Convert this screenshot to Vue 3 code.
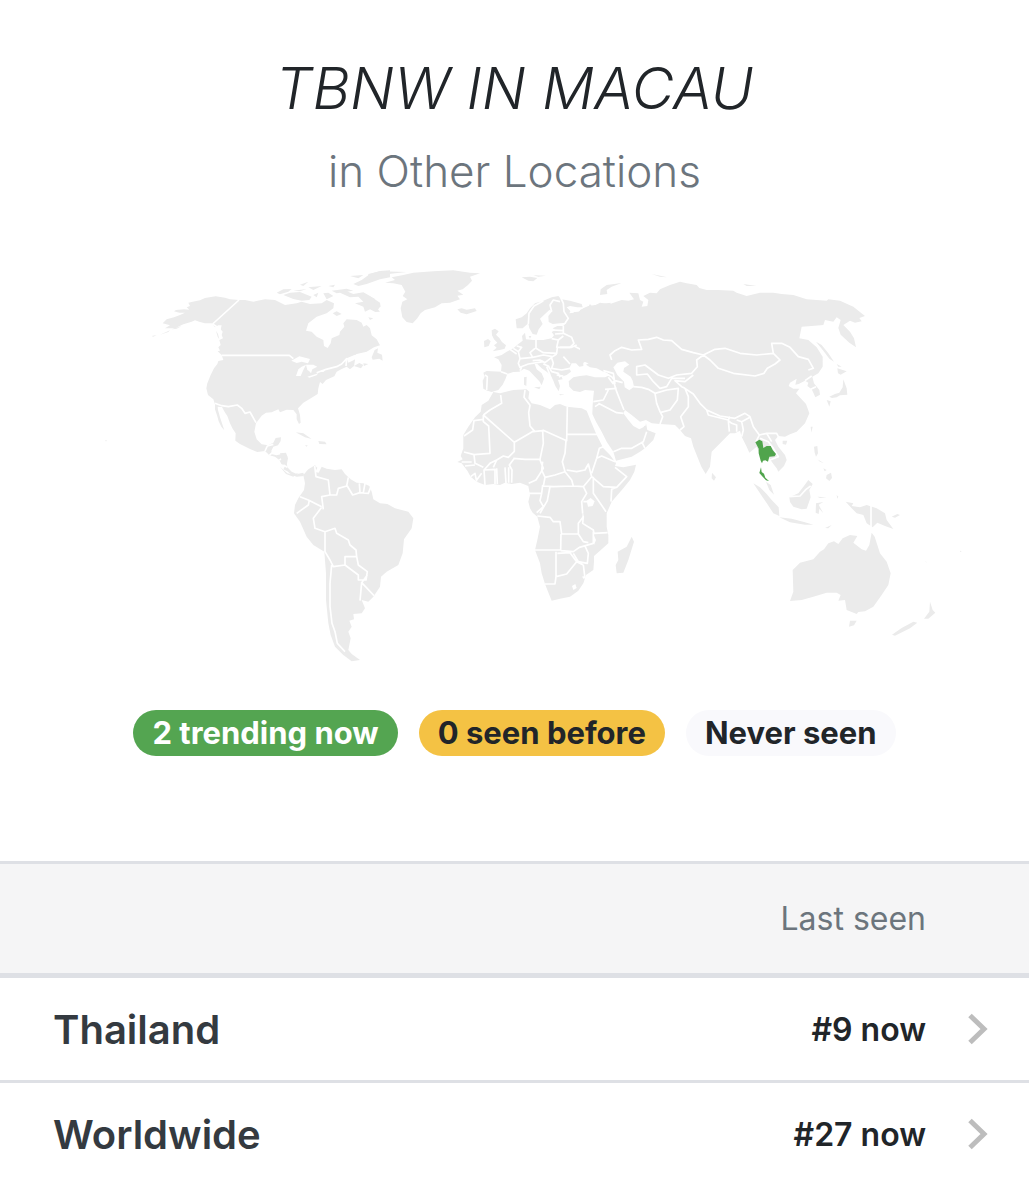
<script setup>
import { ref } from 'vue'

const badges = [
  { kind: 'now', text: '2 trending now' },
  { kind: 'before', text: '0 seen before' },
  { kind: 'never', text: 'Never seen' },
]

const locations = ref([
  { name: 'Thailand', rank: '#9 now' },
  { name: 'Worldwide', rank: '#27 now' },
])

// land = filled shapes, water = lakes cut out of them, borders = country lines
const regions = [
  {
    id: 'north-america',
    at: 'translate(270 -6)',
    land: `M267 120L240 118 225 113 197 109 165 114 150 121 135 124 115 128 120 138 110 142 118 149 102 148 78 150 72 154 88 158 105 158 90 165 72 172 50 178 38 190 60 196 45 205 75 205 100 193 125 185 135 181 150 186 165 190 185 190 195 202 205 196 215 196 212 208 218 215 215 225 219 235 208 240 212 255 205 262 210 272 203 274 215 285 220 300 205 303 202 312 192 325 182 345 172 370 169 385 174 405 190 418 195 433 195 448 201 466 206 484 214 500 223 511 214 484 210 472 204 450 203 440 216 441 224 456 232 468 240 490 248 506 257 520 256 542 270 552 300 567 322 576 345 573 358 586 375 590 388 600 394 612 406 617 400 628 412 634 425 645 440 650 462 648 458 640 442 643 425 635 412 622 410 602 412 588 395 582 380 586 366 583 364 572 370 560 384 556 392 543 393 532 377 534 370 548 355 556 335 553 320 538 313 515 318 490 335 467 348 458 365 457 385 448 390 457 410 449 430 450 440 463 440 478 447 492 452 488 450 465 444 445 460 428 485 413 503 402 505 385 510 366 518 372 528 360 553 349 560 335 575 327 590 320 600 328 612 318 633 325 640 315 628 309 612 318 615 300 605 292 620 282 650 275 672 262 690 256 680 238 665 226 660 205 650 195 640 200 635 188 620 180 590 178 580 190 583 200 570 215 568 225 545 235 542 250 533 264 522 258 520 240 500 230 485 215 468 212 475 190 500 170 530 160 550 145 552 130 530 120 515 130 480 132 455 125 440 130 405 135 375 120 345 118 310 125 285 120Z
M665 292L674 270 684 265 682 278 696 284 698 302 688 296 668 299Z M640 310L655 312 642 318Z
M570 98L590 94 610 102 640 97 660 108 690 128 692 140 680 144 690 155 676 156 660 148 645 155 640 140 615 130 640 125 625 110 600 112Z
M400 105L420 98 450 96 485 110 478 120 455 122 430 117Z M380 98L400 88 425 87 415 95 390 103Z M490 105L505 98 500 112Z M520 100L535 98 550 108 530 118Z M545 92L590 86 610 92 560 100Z
M450 74L475 65 460 78Z M475 82L515 78 490 90Z M535 78L555 74 550 82Z M600 48L640 45 625 55Z M610 72L635 60 660 42 690 33 720 31 720 52 690 58 650 72 625 78Z
M430 92L470 87 450 94Z M548 160L560 154 575 162 560 168Z M655 172L670 175 660 180Z
M30 224L60 211 55 216Z M65 208L95 198 80 206Z M5 228L20 225 10 230Z
M437 517L460 520 485 537 465 532Z M505 543L525 545 530 553 508 552Z M465 556L473 556 470 560Z
M198 212L204 222 208 238 203 230Z`,
    water: `M424 302L448 289 480 297 474 310 455 305 440 309Z M455 320L468 314 460 330 452 348 438 348 445 328Z M468 314L490 314 502 320 487 328 483 340 478 334 472 330Z M472 350L505 340 500 346 478 353Z M505 335L528 329 520 336Z M590 295L615 284 612 300 595 308Z`,
    borders: `M267 120L188 192 212 208 M215 286H418L430 296 M500 338L528 328 560 320 575 312 590 296 588 318 M195 430L215 437 235 440 262 435 275 445 285 460 300 456 318 488 M345 573L352 558 370 553 M358 586L370 575 M388 600L410 588 M400 615L412 622`,
  },
  {
    id: 'north-atlantic',
    at: 'translate(930 -6)',
    land: `M45 68L75 60 65 52 100 45 130 38 190 34 250 31 300 38 330 40 300 50 306 62 294 75 278 88 262 92 280 104 262 107 270 118 240 128 215 130 195 142 165 150 152 160 142 175 128 190 110 186 97 172 92 145 97 125 112 118 98 108 106 95 95 75 70 70Z
M-5 42L30 34 110 36 55 42 30 55 -5 60Z M-3 108L14 116 14 126 30 140 22 152 8 142 -3 148Z
M262 148L275 145 290 149 315 145 320 153 290 163 272 158Z M455 52L480 50 502 54 490 64 475 62Z M490 46L528 47 505 50Z
M365 211L375 206 386 214 378 224 388 234 396 246 408 256 404 266 392 269 368 274 380 263 372 256 382 248 372 238 366 226Z M342 243L354 237 362 244 356 258 343 262Z`,
    water: '',
    borders: '',
  },
  {
    id: 'europe',
    at: 'translate(930 -6)',
    land: `M437 178L455 172 470 160 480 145 495 130 520 122 545 112 565 108 575 118 600 122 635 132 638 142 622 142 600 138 590 142 605 157 625 155 640 145 655 138 722 128 722 340 700 335 680 325 660 322 648 314 662 306 655 300 640 308 640 318 628 320 618 310 605 310 598 325 603 335 590 345 575 350 578 358 564 360 570 378 566 394 556 378 550 362 542 345 530 335 515 325 502 312 494 312 500 328 515 340 522 356 515 376 508 364 490 345 478 332 462 326 448 335 430 336 412 342 406 358 398 374 385 390 365 396 352 392 340 386 338 362 344 350 340 338 350 333 393 335 395 315 385 298 372 292 395 285 410 275 430 265 445 252 458 242 456 228 465 218 468 238 490 240 520 240 545 235 552 226 545 216 556 210 548 205 562 198 580 198 590 188 570 190 548 192 536 186 535 168 548 152 538 150 525 162 510 176 518 192 506 208 500 224 488 222 478 205 475 190 458 205 440 205Z
M462 352L470 350 469 378 462 374Z M492 382L512 380 508 388Z M568 402L584 404 570 406Z M476 228L484 228 480 236Z`,
    water: 'M590 140L602 152 598 160 612 158 604 148Z',
    borders: `M475 192L477 160 492 138 510 128 520 122 M545 155L540 135 550 120 570 125 M570 108L580 130 582 155 595 175 585 190 M580 198L580 220 555 222 M550 210L580 212 M580 220L605 232 612 250 600 262 560 262 565 240 580 228 M545 236L565 240 M498 240L498 265 520 278 560 280 562 262 M612 258L640 272 672 285 675 302 660 306 M495 265L480 278 488 292 450 296 445 275 455 262 440 258 M430 265L445 275 M450 296L445 310 450 322 475 312 520 305 M488 292L520 285 548 290 525 308 510 300 488 302 M548 290L560 282 M545 295L550 310 545 325 575 330 600 325 M580 290L600 312 M520 312L535 318 545 335 565 340 570 352 M393 335L412 342 M345 345L352 350 350 390 M455 322L450 332 M560 345L580 348 M530 320L540 345 M420 268L440 282`,
  },
  {
    id: 'asia',
    at: 'translate(1500 -6)',
    land: `M60 150L85 140 90 132 97 140 120 128 150 132 185 120 205 122 222 118 208 98 235 100 240 120 250 125 245 140 262 138 265 120 250 108 270 98 290 100 300 88 330 75 360 65 380 70 410 75 418 84 440 90 475 90 520 92 530 98 560 108 600 98 640 98 665 102 700 105 740 118 800 122 805 118 840 122 880 140 915 168 898 174 905 184 885 188 870 182 850 195 870 215 882 235 888 262 868 248 842 224 835 204 842 180 830 172 820 185 795 180 790 195 755 198 725 200 718 235 745 240 770 262 788 290 788 320 775 340 757 350 762 370 778 390 780 404 766 412 760 398 755 388 742 378 745 368 735 362 716 372 706 374 710 356 690 368 686 378 700 386 718 386 708 400 722 415 738 432 748 460 735 490 710 515 690 523 675 530 655 528 645 540 655 560 675 585 680 600 672 618 655 635 650 625 640 612 628 595 615 575 600 585 590 560 568 578 560 560 545 530 540 512 525 520 510 520 490 540 470 560 455 575 450 620 437 642 424 620 412 590 400 560 393 535 375 528 360 510 345 495 300 492 275 490 258 480 240 485 215 465 195 450 190 460 205 480 220 498 238 508 250 502 258 490 262 510 287 520 280 540 255 565 240 575 215 590 168 602 160 575 140 545 125 515 108 485 97 462 98 435 100 410 102 392 75 390 60 396 40 392 28 380 26 364 40 352 60 348 80 346 105 352 135 352 150 345 130 332 112 320 60 300Z
M850 358L860 385 862 404 840 406 830 412 816 414 808 410 825 402 838 398 848 382Z M832 325L860 334 842 344 834 340Z M800 420L812 424 808 440Z M768 245L785 255 805 280 822 305 808 296 790 272Z M752 500L758 500 754 518Z M668 542L682 542 678 554 668 552Z M456 638L468 652 462 662 455 655Z
M120 105L122 88 140 75 185 69 155 80 140 90 142 102Z M275 42L322 52 300 50Z M550 72L590 78 560 78Z M830 312L845 320 835 320Z`,
    water: `M160 322L172 308 195 304 208 314 192 324 190 335 212 350 218 362 222 380 208 391 194 382 192 365 172 345Z M247 500L255 486 258 496Z`,
    borders: `M155 300L150 285 165 272 185 262 215 270 245 268 235 240 265 238 290 232 310 240 335 242 365 268 400 278 430 285 465 268 495 265 540 280 590 285 640 280 635 250 665 250 690 262 715 290 745 298 760 325 745 330
M430 285L450 300 475 325 520 340 585 348 612 340 622 325 645 312 660 300 640 280
M430 285L410 300 412 320 395 340 350 345 325 355 295 345 255 315 230 320 230 345 262 342 280 365 300 385 320 380 335 355 375 355 M400 345L375 365 345 362 365 380 375 385
M220 380L245 382 265 388 285 400 290 430 300 455 308 470 300 492 M285 400L320 390 355 385 352 420 330 450 300 458 M375 385L385 410 385 440 362 470 372 500 360 510
M370 382L400 402 420 430 440 450 480 468 525 475 555 460 570 470 580 500 598 525 620 520 650 520 655 530 M440 450L445 465 505 480 510 470 M505 482L515 490 530 495 530 515 M505 482L508 515 M530 480L545 485 570 472 M545 485L550 510 545 530 M598 525L588 545 M600 535L625 545 640 565 655 590 630 600 M620 520L635 545
M160 362L170 395 180 420 192 450 M135 388L170 385 M100 425L130 420 145 390 M115 430L170 458 190 460 M105 440L120 430 M160 575L185 565 215 565 250 545 260 515 M245 545L255 565 M135 340L155 350 165 362 188 368 M145 352L160 372 M165 372L160 340 130 332
M735 362L755 348 M752 388L768 380 M0 262L35 262 50 255`,
  },
  {
    id: 'africa',
    at: 'translate(1170 354)',
    land: `M115 62L130 36 150 40 190 30 230 28 238 35 235 55 245 70 270 75 300 88 315 75 330 72 350 80 395 85 410 92 425 130 440 165 460 205 480 225 498 250 495 258 520 262 558 254 553 275 540 300 520 325 485 365 470 400 470 440 475 465 475 490 450 512 432 528 432 545 430 570 408 585 400 610 385 632 360 650 330 656 305 662 298 645 285 612 275 580 270 550 255 510 262 480 270 440 262 410 248 398 240 385 235 365 240 345 235 318 210 308 185 312 165 308 150 315 130 312 105 315 80 305 62 290 52 272 35 250 22 246 38 238 32 228 40 205 40 165 55 140 75 112 92 95 95 75Z
M545 470L552 485 535 540 520 578 500 580 497 555 505 540 503 515 530 500Z`,
    water: `M410 362L422 354 434 364 428 378 414 380Z M398 392L402 412 397 410Z M430 462L438 480 432 495Z M366 618L376 612 380 624 370 630Z M396 590L403 588 402 598Z`,
    borders: `M152 45L155 70 120 90 100 105 M100 118L72 122 68 150 42 168 M100 105L193 187 252 152 240 138 236 98 240 76 222 52 225 30
M100 105V125L116 138 120 220 72 224 42 216 M193 187V214L175 232 160 228 140 240 130 262 M190 235L225 238 270 238 280 190 278 152 250 155 M278 150L350 182 352 80 M352 163H442
M348 182L345 220 337 245 345 275 315 285 285 292 275 270 278 245 M193 235L178 255 186 270 185 308 M270 240L280 265 258 300 236 310 M285 292L280 318 310 320 370 318 365 300 345 275
M350 270L380 275 405 270 415 252 425 290 400 320 370 318 M425 290L460 320 500 322 530 290 495 262 M425 280L440 235 455 228 495 245 M440 235L448 205 460 200 M500 322L485 328 483 365 M430 290V340L468 395
M300 320L292 362 270 400 M262 408L300 412 310 425 330 425 335 462 385 462 385 430 M236 340H275L278 315 M275 340L270 362 280 380 260 398 M400 320L410 340 395 365 398 400 M400 365H430
M385 462L385 430 400 410 398 430 430 450 432 460 473 458 M333 462L332 510 255 510 M332 512L370 515 388 502 430 490 430 455 M385 462L400 485 415 488 M318 515L318 590 315 612 285 612 M322 520L360 518 380 545 350 582 318 590 M370 520L385 545 412 550 415 520 405 498 M400 555L405 595 M380 545L400 555
M105 315L102 270 135 268V312 M140 265L142 312 M165 262L168 310 M176 262V308 M102 270L120 250 140 240 M72 224L75 250 100 262 M35 246H65 M62 290L75 280 80 305 M95 280L80 300 M45 258L75 255`,
  },
  {
    id: 'south-america',
    at: 'translate(660 564)',
    land: `M70 75L85 58 105 46 112 54 105 66 116 68 125 50 140 56 165 60 185 58 195 72 212 88 230 98 250 100 268 108 275 125 280 148 300 160 322 162 345 175 385 185 400 205 395 235 372 268 368 310 355 345 320 365 303 380 300 410 280 440 265 455 245 450 255 475 245 490 220 492 222 508 208 512 215 530 205 545 212 565 205 600 215 612 240 630 215 634 190 615 165 590 152 555 145 520 138 450 138 370 133 305 100 285 80 260 60 215 42 190 45 165 55 145 72 120 75 100Z M0 10L18 8 24 25 20 45 5 35Z M0 50L22 70 45 74 70 68 72 76 50 70 40 80 18 72Z`,
    water: '',
    borders: `M104 48L108 80 145 90 150 135 125 140 130 178 M150 135L170 135 175 115 200 108 205 82 M200 105L218 135 240 128 238 100 M240 128L265 130 272 112 M255 100L250 128 M60 140L85 150 125 170 M88 150L85 165 50 190 M125 172L100 205 105 235 135 245 165 235 170 250 205 270 210 285 228 300 230 320 195 320 195 345 160 350 150 330 135 305 135 245 M230 320L235 345 262 365 258 390 235 390 235 375 195 345 M262 375L245 398 282 437 M245 398L240 452 M155 345L150 400 150 470 156 520 165 545 172 580 195 605`,
  },
  {
    id: 'oceania',
    at: 'translate(1860 414)',
    land: `M348 500L360 488 400 478 420 455 432 448 445 430 462 424 475 432 488 415 510 405 532 408 520 428 545 448 558 452 568 435 575 398 584 410 592 435 600 460 620 485 632 520 625 555 605 585 580 620 555 634 535 636 530 642 500 630 495 600 475 602 482 585 470 578 440 578 400 590 365 600 330 603 340 575 338 510Z
M510 662L530 662 522 676 507 680Z M750 605L758 630 766 638 745 656 732 656 748 635Z M636 704L665 684 700 665 712 668 690 685 645 707Z M735 482L742 488 738 486Z
M497 305L520 310 515 318 540 322 560 315 590 325 615 340 620 360 640 387 615 378 592 368 578 382 560 370 550 345 530 340 515 325Z M635 350L652 342 660 345 645 353Z M470 285L475 290 472 296Z
M220 250L240 262 260 282 275 300 296 322 298 348 280 340 262 312 240 280Z M298 352L335 356 372 366 400 374 375 374 330 367Z M435 384L455 375 445 385Z M328 292L355 280 372 258 385 240 398 252 388 270 392 292 380 326 365 328 340 320 330 306Z
M408 310L430 306 416 314 430 340 418 326 416 342 407 338Z M412 290L440 292 420 294Z M402 140L412 138 414 160 408 170 404 158Z M412 178L432 190 420 185Z M440 225L453 218 456 234 448 243 438 235Z M430 205L440 210 434 214Z M258 245L272 255 282 284 268 270Z`,
    water: '',
    borders: 'M573 312V388 M328 290L360 288 378 268 392 258',
  },
]
const thailand = 'M226 127L238 119 247 124 250 144 260 138 272 138 278 150 288 162 284 169 268 170 264 185 256 181 249 182 246 190 242 182 236 160 236 146Z M243 202L245 216 252 221 256 233 267 243 258 241 248 230 238 219Z'
</script>

<template>
  <main class="page">
    <header class="head">
      <h1>TBNW IN MACAU</h1>
      <p>in Other Locations</p>
    </header>

    <div class="map">
      <svg viewBox="0 0 2727 1212" role="img" aria-label="World map">
        <g v-for="r in regions" :key="r.id" :transform="r.at">
          <path class="land" :d="r.land" />
          <path class="water" :d="r.water" />
          <path class="borders" :d="r.borders" />
        </g>
        <path class="active" transform="translate(1860 414)" :d="thailand" />
        <circle class="land" cx="138" cy="536" r="2" />
        <circle class="land" cx="2702" cy="868" r="2" />
      </svg>
    </div>

    <div class="badges">
      <span v-for="b in badges" :key="b.kind" class="badge" :class="b.kind">{{ b.text }}</span>
    </div>

    <table class="list">
      <thead>
        <tr>
          <th class="name"></th>
          <th class="seen">Last seen</th>
          <th class="go"></th>
        </tr>
      </thead>
      <tbody>
        <tr v-for="l in locations" :key="l.name">
          <td class="name"><a href="#">{{ l.name }}</a></td>
          <td class="seen">{{ l.rank }}</td>
          <td class="go">
            <a href="#" :aria-label="l.name">
              <svg viewBox="0 0 20 32" aria-hidden="true"><path d="M2 2.5L16 16 2 29.5" /></svg>
            </a>
          </td>
        </tr>
      </tbody>
    </table>
  </main>
</template>

<style>
body{background:#fff}
</style>

<style scoped>
.page{font-family:Inter,"Liberation Sans",sans-serif;color:#212529}
.head{padding:52px 24px 0;text-align:center}
h1{margin:0;font-size:58px;line-height:72px;font-weight:300;font-style:italic}
.head p{margin:20px 0 0;font-size:44px;line-height:54px;font-weight:300;color:#6c757d}

.map{padding:64px 60px 0}
.map svg{display:block;width:100%}
.land{fill:#ebebeb}
.water{fill:#fff}
.borders{fill:none;stroke:#fff;stroke-width:5;stroke-linejoin:round}
.active{fill:#50a44c}

.badges{display:flex;flex-wrap:wrap;justify-content:center;gap:21px;padding:44px 16px 0}
.badge{padding:0 19px;border-radius:23px;font-size:31px;line-height:46px;font-weight:700}
.now{background:#54a551;color:#fff}
.before{background:#f4c244}
.never{background:#f9f9fc}

.list{width:100%;margin-top:105px;border-collapse:separate;border-spacing:0}
.list th,.list td{padding:0;text-align:left}
.list th{height:109px;background:#f5f5f6;border-top:3px solid #dee0e5;border-bottom:5px solid #dee0e5;color:#6c757d;font-size:32px;font-weight:400}
.list td{height:102px;border-bottom:3px solid #dee0e5}
.list tr:last-child td{border-bottom:0}
.list thead tr:last-child th{border-bottom-width:5px}
.list .name{padding-left:53px}
td.name{font-size:40px;font-weight:600}
td.name a{color:#343a40;text-decoration:none}
.list .seen{text-align:right;white-space:nowrap}
td.seen{font-size:32px;font-weight:600}
.list .go{width:62px;padding-right:41px}
.go a{display:flex;justify-content:flex-end}
.go svg{width:20px;height:32px;fill:none;stroke:#bdbdbd;stroke-width:5}
</style>
